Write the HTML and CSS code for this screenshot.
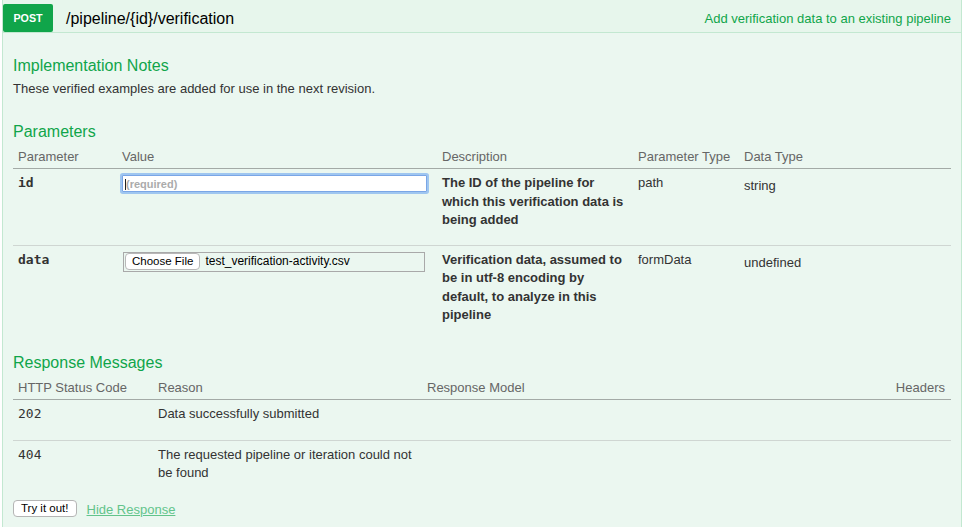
FILE: index.html
```html
<!DOCTYPE html>
<html lang="en">
<head>
<meta charset="utf-8">
<title>POST /pipeline/{id}/verification</title>
<link rel="stylesheet" href="styles.css">
</head>
<body>
<div class="operation">
  <div class="heading">
    <span class="method">POST</span>
    <span class="path">/pipeline/{id}/verification</span>
    <span class="summary">Add verification data to an existing pipeline</span>
  </div>
  <div class="content">
    <h4 class="section-title">Implementation Notes</h4>
    <p class="notes">These verified examples are added for use in the next revision.</p>

    <h4 class="section-title">Parameters</h4>
    <table class="grid params">
      <colgroup>
        <col class="c-param"><col class="c-value"><col class="c-desc"><col class="c-ptype"><col>
      </colgroup>
      <thead>
        <tr><th>Parameter</th><th>Value</th><th>Description</th><th>Parameter Type</th><th>Data Type</th></tr>
      </thead>
      <tbody>
        <tr>
          <td class="code strong">id</td>
          <td><span class="field-wrap"><input class="text-input" type="text" placeholder="(required)"></span></td>
          <td class="desc"><p>The ID of the pipeline for which this verification data is being added</p></td>
          <td>path</td>
          <td class="dtype">string</td>
        </tr>
        <tr>
          <td class="code strong">data</td>
          <td>
            <div class="file-field">
              <span class="file-btn">Choose File</span>
              <span class="file-name">test_verification-activity.csv</span>
            </div>
          </td>
          <td class="desc"><p>Verification data, assumed to be in utf-8 encoding by default, to analyze in this pipeline</p></td>
          <td>formData</td>
          <td class="dtype">undefined</td>
        </tr>
      </tbody>
    </table>

    <h4 class="section-title">Response Messages</h4>
    <table class="grid responses">
      <colgroup>
        <col class="c-code"><col class="c-reason"><col><col class="c-headers">
      </colgroup>
      <thead>
        <tr><th>HTTP Status Code</th><th>Reason</th><th>Response Model</th><th class="right">Headers</th></tr>
      </thead>
      <tbody>
        <tr>
          <td class="code">202</td>
          <td class="reason"><p>Data successfully submitted</p></td>
          <td></td>
          <td></td>
        </tr>
        <tr>
          <td class="code">404</td>
          <td class="reason"><p>The requested pipeline or iteration could not be found</p></td>
          <td></td>
          <td></td>
        </tr>
      </tbody>
    </table>

    <div class="sandbox">
      <button class="try-btn" type="button">Try it out!</button>
      <a class="hide-link" href="#">Hide Response</a>
    </div>
  </div>
</div>
</body>
</html>
```

FILE: styles.css
```css
html, body {
  margin: 0;
  padding: 0;
  background: #ffffff;
}

body {
  font-family: "Liberation Sans", Arial, Helvetica, sans-serif;
  font-size: 13px;
  color: #333333;
}

.operation {
  margin-left: 2px;
  width: 960px;
}

/* ---------- heading bar ---------- */
.heading {
  display: flex;
  align-items: center;
  height: 32px;
  box-sizing: content-box;
  padding: 0;
  background: #e7f6ec;
  border: 1px solid #c3e8d1;
  border-top: none;
}

.method {
  align-self: flex-end;
  width: 50px;
  height: 28px;
  line-height: 28px;
  background: #10a54a;
  color: #ffffff;
  font-weight: bold;
  font-size: 10.7px;
  text-align: center;
  border-radius: 2px;
}

.path {
  padding-left: 13px;
  font-size: 16px;
  line-height: 20px;
  color: #000000;
  margin-top: 5px;
}

.summary {
  margin-left: auto;
  padding-right: 10px;
  font-size: 13px;
  line-height: 16px;
  color: #10a54a;
  margin-top: 5px;
}

/* ---------- content ---------- */
.content {
  background: #ebf7f0;
  border: 1px solid #c3e8d1;
  border-top: none;
  padding: 10px 10px 12px;
}

.section-title {
  margin: 0;
  padding: 13px 0 4px;
  font-size: 16px;
  line-height: 20px;
  font-weight: normal;
  color: #10a54a;
}

.notes {
  margin: 0 0 12px;
  padding-top: 1px;
  line-height: 16px;
}

/* ---------- tables ---------- */
.grid {
  width: 100%;
  border-collapse: collapse;
  table-layout: fixed;
}

.grid th {
  text-align: left;
  font-weight: normal;
  color: #666666;
  font-size: 13px;
  line-height: 16px;
  padding: 3px 5px 3px;
  border-bottom: 1px solid #a3aaa6;
}

.grid th.right {
  text-align: right;
  padding-right: 6px;
}

.grid td {
  vertical-align: top;
  padding: 5px 5px;
  line-height: 18.5px;
  font-size: 13px;
  color: #333333;
  border-bottom: 1px solid #cfd6d2;
}

.grid tbody tr:last-child td {
  border-bottom: none;
}

.grid td p {
  margin: 0 0 10px;
}

.c-param { width: 104px; }
.c-value { width: 320px; }
.c-desc { width: 196px; }
.c-ptype { width: 106px; }

.c-code { width: 140px; }
.c-reason { width: 269px; }
.c-headers { width: 110px; }

.code {
  font-family: "DejaVu Sans Mono", "Liberation Mono", monospace;
  font-size: 12.5px;
  color: #000000;
}

.code.strong {
  font-weight: bold;
}

.desc {
  font-weight: bold;
}

.grid td.dtype {
  padding-top: 8px;
}

.responses td {
  line-height: 18px;
}

.responses td p {
  margin: 0 0 12px;
}

/* ---------- inputs ---------- */
.field-wrap {
  position: relative;
  display: block;
  width: 305px;
}

.field-wrap::before {
  content: "";
  position: absolute;
  left: 3px;
  top: 4px;
  width: 1px;
  height: 11px;
  background: #222222;
}

.text-input {
  display: block;
  box-sizing: border-box;
  width: 305px;
  height: 17px;
  margin: 1px 0 0;
  padding: 0 3px;
  border: 1px solid #7aa6e6;
  border-radius: 1px;
  box-shadow: 0 0 0 2px rgba(96, 158, 240, 0.55);
  background: #ffffff;
  font-family: "Liberation Sans", Arial, sans-serif;
  font-size: 11px;
  font-weight: bold;
  outline: none;
}

.text-input::placeholder {
  color: #ababab;
}

.file-field {
  display: flex;
  align-items: center;
  box-sizing: border-box;
  width: 302px;
  height: 20px;
  margin: 1px 0 0 1px;
  border: 1px solid #a9a9a9;
  background: #ebf7f0;
}

.file-btn {
  box-sizing: border-box;
  height: 17px;
  line-height: 15px;
  margin-left: 1px;
  padding: 0 6px;
  border: 1px solid #b8b8b8;
  border-radius: 4px;
  background: #ffffff;
  font-size: 11.5px;
  color: #000000;
}

.file-name {
  margin-left: 5px;
  font-size: 12px;
  color: #000000;
  white-space: nowrap;
}

/* ---------- sandbox ---------- */
.sandbox {
  display: flex;
  align-items: center;
  margin-top: 1px;
}

.try-btn {
  box-sizing: border-box;
  height: 17px;
  padding: 0 7px;
  margin: 0;
  border: 1px solid #b5b5b5;
  border-radius: 4px;
  background: #ffffff;
  font-family: "Liberation Sans", Arial, sans-serif;
  font-size: 11.5px;
  line-height: 15px;
  color: #000000;
}

.hide-link {
  margin-left: 10px;
  font-size: 13px;
  color: #62c48b;
  text-decoration: underline;
  margin-top: 2px;
}
```
